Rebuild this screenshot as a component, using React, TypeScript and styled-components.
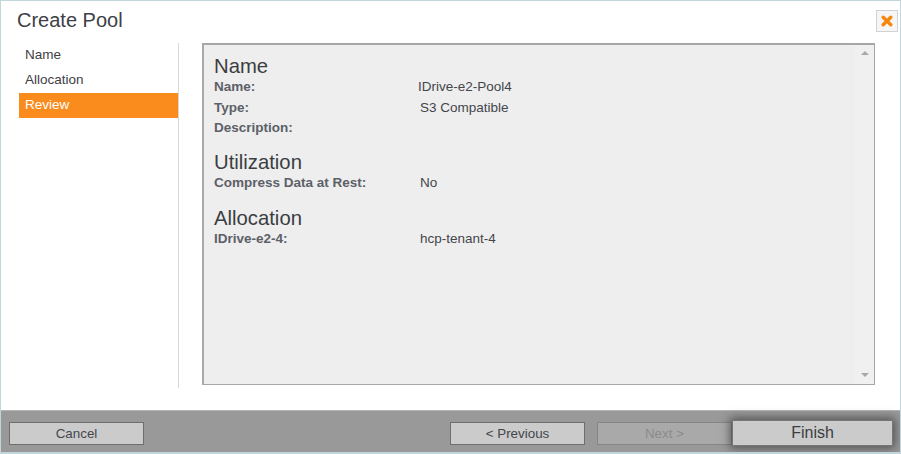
import React from "react";
import styled, { createGlobalStyle } from "styled-components";

const Global = createGlobalStyle`
  html, body { margin: 0; padding: 0; background: #fff; }
  body { font-family: "Liberation Sans", Arial, sans-serif; }
`;

const Dialog = styled.div`
  box-sizing: border-box;
  width: 901px;
  height: 454px;
  display: flex;
  flex-direction: column;
  background: #fff;
  border: 1px solid #c3d5dc;
  border-bottom-width: 2px;
  overflow: hidden;
`;

const Header = styled.header`
  height: 42px;
  flex: none;
  display: flex;
  justify-content: space-between;
  padding: 9px 2px 0 16px;
  box-sizing: border-box;
`;

const Title = styled.h1`
  margin: -1px 0 0;
  font-size: 20px;
  line-height: 22px;
  font-weight: 400;
  color: #3d4046;
`;

const CloseButton = styled.button`
  box-sizing: border-box;
  width: 22px;
  height: 22px;
  padding: 0;
  display: flex;
  align-items: center;
  justify-content: center;
  background: #f6f6f6;
  border: 1px solid #d2d2d2;
`;

const Body = styled.main`
  flex: 1;
  display: flex;
  min-height: 0;
  padding-right: 25px;
`;

const Nav = styled.nav`
  box-sizing: border-box;
  width: 178px;
  height: 345px;
  flex: none;
  padding: 0 0 0 18px;
  border-right: 1px solid #d8d8d8;
  margin-right: 23px;
`;

const NavItem = styled.div<{ $active?: boolean }>`
  height: 25px;
  line-height: 24px;
  padding-left: 6px;
  font-size: 13.5px;
  color: ${(p) => (p.$active ? "#fff" : "#3f4046")};
  background: ${(p) => (p.$active ? "#fa8c1e" : "transparent")};
`;

const Panel = styled.section`
  box-sizing: border-box;
  flex: 1;
  height: 342px;
  display: flex;
  background: #eeeeee;
  border: 1px solid #a6a6a6;
  border-top-width: 2px;
  border-left: 2px solid #a8a8a8;
`;

const Content = styled.div`
  flex: 1;
  padding: 9px 0 0 10px;
`;

const Scrollbar = styled.div`
  width: 20px;
  flex: none;
  display: flex;
  flex-direction: column;
  justify-content: space-between;
  align-items: center;
  padding: 6px 0 7px 2px;
  box-sizing: border-box;
  background: #f0f0f0;
`;

const Arrow = styled.div<{ $down?: boolean }>`
  width: 0;
  height: 0;
  border-left: 4px solid transparent;
  border-right: 4px solid transparent;
  ${(p) =>
    p.$down
      ? "border-top: 4px solid #a8a8a8;"
      : "border-bottom: 4px solid #a8a8a8;"}
`;

const SectionTitle = styled.h2<{ $gap?: number }>`
  margin: ${(p) => p.$gap ?? 0}px 0 0;
  font-size: 20.3px;
  line-height: 24px;
  font-weight: 400;
  color: #3b3d42;
`;

const Row = styled.div`
  display: flex;
  height: 20.5px;
  font-size: 13.5px;
  line-height: 20px;
  margin-top: -1px;
  margin-bottom: 1px;
`;

const Label = styled.div`
  width: 204px;
  flex: none;
  font-weight: 700;
  color: #5c6068;
`;

const Value = styled.div<{ $shift?: number }>`
  color: #44464c;
  margin-left: ${(p) => p.$shift ?? 0}px;
`;

const Footer = styled.footer`
  flex: none;
  height: 42px;
  box-sizing: border-box;
  display: flex;
  align-items: center;
  padding: 3px 7px 0 8px;
  background: #999999;
  border-top: 1px solid #b5b5b5;
`;

const Btn = styled.button<{ $disabled?: boolean }>`
  box-sizing: border-box;
  width: 135px;
  height: 23px;
  padding: 0;
  font-family: inherit;
  font-size: 13.4px;
  background: #cbcbcb;
  color: ${(p) => (p.$disabled ? "#8b8b8b" : "#44464c")};
  border: 1px solid ${(p) => (p.$disabled ? "#858585" : "#6e6e6e")};
  ${(p) => p.$disabled && "background: #a9a9a9;"}
`;

const Spacer = styled.div`
  flex: 1;
`;

const NextBtn = styled(Btn)`
  margin-left: 12px;
`;

const FinishBtn = styled(Btn)`
  position: relative;
  width: 161px;
  height: 26px;
  font-size: 16px;
  color: #3b3d42;
  border-color: #777;
  box-shadow: 0 0 9px 2px rgba(40, 40, 40, 0.65);
`;

export default function App() {
  return (
    <>
      <Global />
      <Dialog>
        <Header>
          <Title>Create Pool</Title>
          <CloseButton aria-label="Close">
            <svg width="12" height="12" viewBox="0 0 12 12">
              <path d="M2.2 2.2 L9.8 9.8 M9.8 2.2 L2.2 9.8" stroke="#f5870f" strokeWidth="3.4" strokeLinecap="round" />
            </svg>
          </CloseButton>
        </Header>
        <Body>
          <Nav>
            <NavItem>Name</NavItem>
            <NavItem>Allocation</NavItem>
            <NavItem $active>Review</NavItem>
          </Nav>
          <Panel>
            <Content>
              <SectionTitle>Name</SectionTitle>
              <Row><Label>Name:</Label><Value>IDrive-e2-Pool4</Value></Row>
              <Row><Label>Type:</Label><Value $shift={2}>S3 Compatible</Value></Row>
              <Row><Label>Description:</Label></Row>
              <SectionTitle $gap={11}>Utilization</SectionTitle>
              <Row><Label>Compress Data at Rest:</Label><Value $shift={2}>No</Value></Row>
              <SectionTitle $gap={13}>Allocation</SectionTitle>
              <Row><Label>IDrive-e2-4:</Label><Value $shift={2}>hcp-tenant-4</Value></Row>
            </Content>
            <Scrollbar>
              <Arrow />
              <Arrow $down />
            </Scrollbar>
          </Panel>
        </Body>
        <Footer>
          <Btn>Cancel</Btn>
          <Spacer />
          <Btn>&lt; Previous</Btn>
          <NextBtn $disabled>Next &gt;</NextBtn>
          <FinishBtn>Finish</FinishBtn>
        </Footer>
      </Dialog>
    </>
  );
}
